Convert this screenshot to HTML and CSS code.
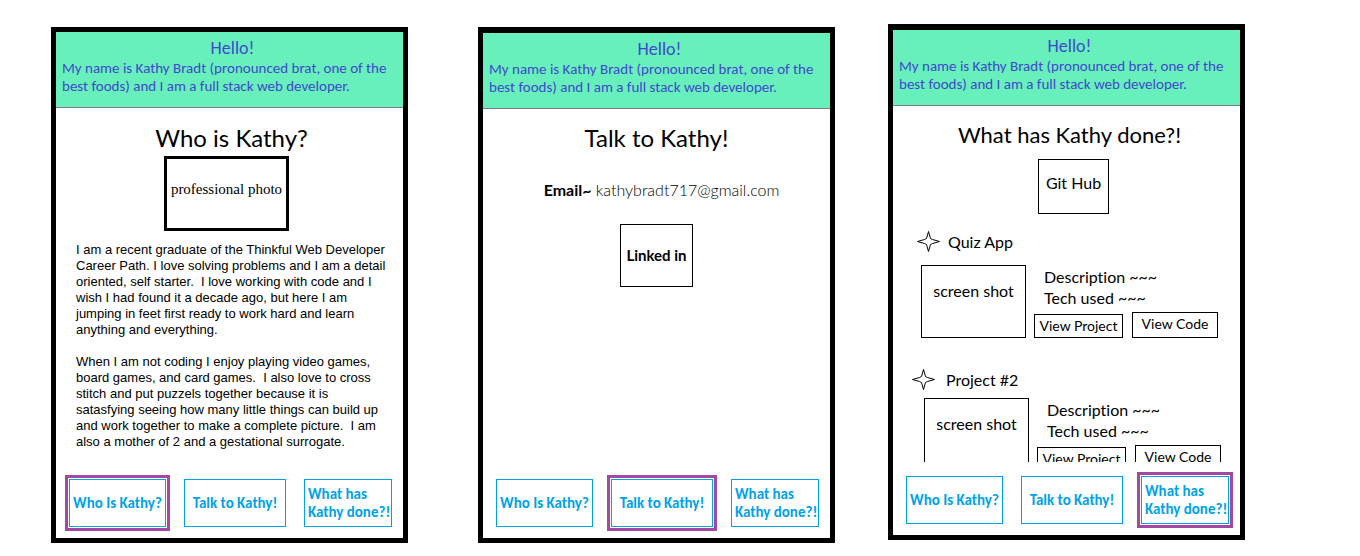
FILE: index.html
```html
<!DOCTYPE html>
<html lang="en">
<head>
<meta charset="utf-8">
<title>Kathy Bradt</title>
<link rel="stylesheet" href="styles.css">
</head>
<body>
<div class="board">
  <section class="screen screen-about">
    <header class="intro">
      <h1>Hello!</h1>
      <p>My name is Kathy Bradt (pronounced brat, one of the best foods) and I am a full stack web developer.</p>
    </header>
    <main class="content">
      <h2>Who is Kathy?</h2>
      <div class="photo">professional photo</div>
      <div class="bio">
        <p>I am a recent graduate of the Thinkful Web Developer Career Path. I love solving problems and I am a detail oriented, self starter.&nbsp; I love working with code and I wish I had found it a decade ago, but here I am jumping in feet first ready to work hard and learn anything and everything.</p>
        <p>When I am not coding I enjoy playing video games, board games, and card games.&nbsp; I also love to cross stitch and put puzzels together because it is satasfying seeing how many little things can build up and work together to make a complete picture.&nbsp; I am also a mother of 2 and a gestational surrogate.</p>
      </div>
    </main>
    <nav class="tabs">
      <button class="tab current">Who Is Kathy?</button>
      <button class="tab">Talk to Kathy!</button>
      <button class="tab tab-done">What has<br>Kathy done?!</button>
    </nav>
  </section>

  <section class="screen screen-contact">
    <header class="intro">
      <h1>Hello!</h1>
      <p>My name is Kathy Bradt (pronounced brat, one of the best foods) and I am a full stack web developer.</p>
    </header>
    <main class="content">
      <h2>Talk to Kathy!</h2>
      <p class="email"><strong>Email~</strong> <a href="mailto:kathybradt717@gmail.com">kathybradt717@gmail.com</a></p>
      <a class="box linkedin" href="#linkedin">Linked in</a>
    </main>
    <nav class="tabs">
      <button class="tab">Who Is Kathy?</button>
      <button class="tab current">Talk to Kathy!</button>
      <button class="tab tab-done">What has<br>Kathy done?!</button>
    </nav>
  </section>

  <section class="screen screen-work">
    <header class="intro">
      <h1>Hello!</h1>
      <p>My name is Kathy Bradt (pronounced brat, one of the best foods) and I am a full stack web developer.</p>
    </header>
    <main class="content">
      <h2>What has Kathy done?!</h2>
      <a class="box github" href="#github">Git Hub</a>
      <div class="projects">
        <article class="project">
          <h3><svg class="star" viewBox="0 0 23 21" aria-hidden="true"><path d="M11.5 .5 13.5 7.5 15.5 8.5 22.5 10.5 15.5 12.5 13.5 13.5 11.5 20.5 9.5 13.5 7.5 12.5 .5 10.5 7.5 8.5 9.5 7.5Z"/></svg>Quiz App</h3>
          <div class="project-body">
            <div class="box shot">screen shot</div>
            <div class="details">
              <p>Description ~~~</p>
              <p>Tech used ~~~</p>
              <div class="actions">
                <button class="box view-project">View Project</button>
                <button class="box view-code">View Code</button>
              </div>
            </div>
          </div>
        </article>
        <article class="project project-second">
          <h3><svg class="star" viewBox="0 0 23 21" aria-hidden="true"><path d="M11.5 .5 13.5 7.5 15.5 8.5 22.5 10.5 15.5 12.5 13.5 13.5 11.5 20.5 9.5 13.5 7.5 12.5 .5 10.5 7.5 8.5 9.5 7.5Z"/></svg>Project #2</h3>
          <div class="project-body">
            <div class="box shot">screen shot</div>
            <div class="details">
              <p>Description ~~~</p>
              <p>Tech used ~~~</p>
              <div class="actions">
                <button class="box view-project">View Project</button>
                <button class="box view-code">View Code</button>
              </div>
            </div>
          </div>
        </article>
      </div>
    </main>
    <nav class="tabs">
      <button class="tab">Who Is Kathy?</button>
      <button class="tab">Talk to Kathy!</button>
      <button class="tab tab-done current">What has<br>Kathy done?!</button>
    </nav>
  </section>
</div>
</body>
</html>
```
FILE: styles.css
```css
* {
  box-sizing: border-box;
}

body,
h1,
h2,
h3,
p {
  margin: 0;
}

body {
  background: #fff;
  color: #000;
  font-family: Calibri, Carlito, Lato, sans-serif;
  font-variant-ligatures: none;
}

.board {
  display: flex;
  align-items: flex-start;
  padding: 24px 115px 0 51px;
}

.screen {
  flex: 1;
  min-width: 0;
  height: calc(100vh - 40px);
  display: flex;
  flex-direction: column;
  border: 5px solid #000;
  border-top-width: 6px;
}

.screen-about {
  margin-top: 3px;
  margin-right: 70px;
  border-top-width: 5px;
}

.screen-contact {
  margin-top: 3px;
  margin-right: 53px;
}

.intro {
  height: 76px;
  padding: 5px 6px 0;
  background: #68f0bc;
  border-bottom: 1px solid #7f7f7f;
  color: #3f48cc;
}

.intro h1 {
  padding-left: 6px;
  font-size: 18px;
  font-weight: 400;
  line-height: 22px;
  text-align: center;
}

.intro p {
  font-size: 15px;
  line-height: 18px;
}

.content {
  flex: 1;
  min-height: 0;
  display: flex;
  flex-direction: column;
  align-items: center;
  padding-top: 15px;
  font-family: "Ink Free", Lato, sans-serif;
}

h2 {
  padding-left: 4px;
  font-size: 24px;
  font-weight: 400;
  line-height: 30px;
}

.screen-contact h2,
.screen-work h2 {
  padding-left: 0;
  line-height: 28px;
}

.screen-work h2 {
  padding-left: 6px;
  font-size: 22px;
}

.box {
  display: flex;
  justify-content: center;
  border: 1px solid #000;
  background: #fff;
  color: #000;
  font-family: inherit;
  text-decoration: none;
  white-space: nowrap;
}

.photo {
  width: 125px;
  height: 75px;
  margin: 3px 6px 0 0;
  border: 3px solid #000;
  font: 15px/60px "Book Antiqua", "Liberation Serif", serif;
  text-align: center;
  white-space: nowrap;
}

.bio {
  display: grid;
  gap: 16px;
  padding: 11px 14px 0 20px;
  font: 13px/16px "Liberation Sans", Arial, sans-serif;
}

.email {
  margin-top: 26px;
  padding-left: 10px;
  font-size: 16px;
  line-height: 24px;
}

.email a {
  color: inherit;
  font-weight: 300;
  text-decoration: none;
}

.linkedin {
  width: 73px;
  height: 63px;
  margin-top: 22px;
  font-size: 15px;
  font-weight: 700;
  line-height: 60px;
}

.github {
  width: 71px;
  height: 55px;
  margin-top: 10px;
  margin-left: 14px;
  font-size: 16px;
  line-height: 45px;
}

.projects {
  flex: 1;
  min-height: 0;
  align-self: stretch;
  overflow: hidden;
  margin-top: 16px;
}

.project {
  padding-left: 24px;
}

.project h3 {
  display: flex;
  align-items: center;
  gap: 8px;
  height: 23px;
  font-size: 16px;
  font-weight: 400;
}

.project-second {
  padding-left: 19px;
  padding-top: 30px;
}

.star {
  width: 23px;
  height: 21px;
  fill: #fff;
  stroke: #000;
}

.project-body {
  display: flex;
  gap: 8px;
  padding: 12px 0 0 4px;
}

.project-second h3 {
  gap: 11px;
}

.project-second .project-body {
  padding: 7px 0 0 12px;
}

.shot {
  width: 105px;
  height: 73px;
  font-size: 16px;
  line-height: 50px;
}

.details {
  padding-top: 1px;
  font-size: 16px;
  line-height: 21px;
}

.details p {
  padding-left: 10px;
}

.actions {
  display: flex;
  align-items: flex-end;
  gap: 9px;
  margin-top: 4px;
}

.view-project,
.view-code {
  padding: 0;
  font-size: 14px;
  line-height: 22px;
}

.view-project {
  width: 89px;
  height: 24px;
}

.view-code {
  width: 86px;
  height: 26px;
}

.tabs {
  display: grid;
  grid-template-columns: 97fr 102fr 88fr;
  gap: 18px;
  padding: 14px 11px 11px 13px;
}

.tab {
  min-width: 0;
  height: 48px;
  padding: 0;
  border: 1px solid #00a2e8;
  background: #fff;
  color: #00a2e8;
  font: 700 15px/18px Calibri, Carlito, Lato, sans-serif;
  white-space: nowrap;
}

.tab-done {
  padding-left: 3px;
  text-align: left;
}

.tab.current {
  outline: 3px solid #a349a4;
  outline-offset: 1px;
}
```
